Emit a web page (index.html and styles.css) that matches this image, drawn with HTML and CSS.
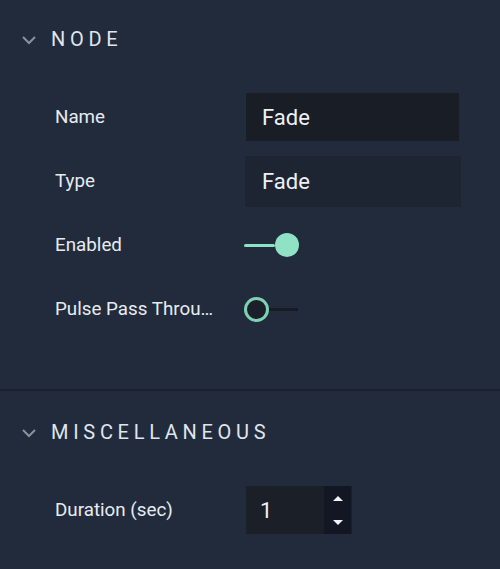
FILE: index.html
```html
<!DOCTYPE html>
<html>
<head>
<meta charset="utf-8">
<link rel="stylesheet" href="styles.css">
</head>
<body>
<div class="panel">
  <section class="section">
    <div class="section-header">
      <svg class="chevron" width="16" height="10" viewBox="0 0 16 10"><path d="M2 2 L8 8 L14 2" fill="none" stroke="#8a919d" stroke-width="2"/></svg>
      <span class="section-title">NODE</span>
    </div>
    <div class="rows">
      <div class="row">
        <span class="label">Name</span>
        <div class="field field-name">Fade</div>
      </div>
      <div class="row">
        <span class="label">Type</span>
        <div class="field field-type">Fade</div>
      </div>
      <div class="row">
        <span class="label">Enabled</span>
        <div class="toggle toggle-on"><span class="track"></span><span class="knob"></span></div>
      </div>
      <div class="row">
        <span class="label">Pulse Pass Through</span>
        <div class="toggle toggle-off"><span class="knob"></span><span class="track"></span></div>
      </div>
    </div>
  </section>
  <section class="section section-misc">
    <div class="section-header">
      <svg class="chevron" width="16" height="10" viewBox="0 0 16 10"><path d="M2 2 L8 8 L14 2" fill="none" stroke="#8a919d" stroke-width="2"/></svg>
      <span class="section-title">MISCELLANEOUS</span>
    </div>
    <div class="rows">
      <div class="row">
        <span class="label">Duration (sec)</span>
        <div class="number">
          <span class="number-value">1</span>
          <div class="spinner">
            <span class="arrow arrow-up"></span>
            <span class="arrow arrow-down"></span>
          </div>
        </div>
      </div>
    </div>
  </section>
</div>
</body>
</html>
```
FILE: styles.css
```css
html, body {
  margin: 0;
  padding: 0;
  background: #222b3b;
}
body {
  font-family: Roboto, "Liberation Sans", sans-serif;
  color: #e4e9f0;
  width: 500px;
  height: 569px;
  overflow: hidden;
}
.panel {
  display: flex;
  flex-direction: column;
}
.section {
  padding-bottom: 48px;
  border-bottom: 2px solid #1b212c;
}
.section-misc {
  border-bottom: none;
  padding-top: 2px;
  padding-bottom: 0;
}
.section-header {
  height: 78px;
  display: flex;
  align-items: center;
  padding-left: 21px;
}
.chevron {
  display: block;
  margin-right: 14px;
  margin-top: 2px;
}
.section-title {
  font-size: 20px;
  letter-spacing: 4.7px;
  color: #dfe5ee;
}
.rows {
  padding-top: 7px;
  display: flex;
  flex-direction: column;
}
.row {
  height: 64px;
  display: flex;
  align-items: center;
  padding-left: 55px;
}
.label {
  width: 160px;
  margin-right: 30px;
  font-size: 18.8px;
  white-space: nowrap;
  overflow: hidden;
  text-overflow: ellipsis;
  color: #e6ebf2;
}
.field {
  box-sizing: border-box;
  font-size: 22px;
  color: #edf1f6;
  display: flex;
  align-items: center;
  padding-left: 16px;
}
.field-name {
  width: 213px;
  height: 48px;
  background: #181d26;
  margin-left: 1px;
}
.field-type {
  width: 216px;
  height: 51px;
  background: #1e2532;
  padding-left: 17px;
}
.toggle {
  display: flex;
  align-items: center;
  margin-left: -1px;
}
.toggle-on .track {
  width: 31px;
  height: 3px;
  background: #8fe2c3;
  border-radius: 2px;
}
.toggle-on .knob {
  width: 24px;
  height: 24px;
  border-radius: 50%;
  background: #8fe2c3;
}
.toggle-off .knob {
  box-sizing: border-box;
  width: 25px;
  height: 25px;
  border-radius: 50%;
  background: #1a1f29;
  border: 3px solid #7fd1b3;
}
.toggle-off .track {
  width: 29px;
  height: 3px;
  background: #171c24;
}
.number {
  display: flex;
  width: 106px;
  height: 48px;
  background: #1a1f28;
  margin-left: 1px;
}
.number-value {
  flex: 1;
  display: flex;
  align-items: center;
  padding-left: 14px;
  font-size: 22px;
  color: #edf1f6;
}
.spinner {
  width: 27px;
  background: #121723;
  display: flex;
  flex-direction: column;
  align-items: center;
  justify-content: space-between;
  padding: 10px 0 9px;
  margin-right: 1px;
}
.arrow {
  width: 0;
  height: 0;
  border-left: 5px solid transparent;
  border-right: 5px solid transparent;
}
.arrow-up {
  border-bottom: 5px solid #f2f4f7;
}
.arrow-down {
  border-top: 5px solid #f2f4f7;
}
```
